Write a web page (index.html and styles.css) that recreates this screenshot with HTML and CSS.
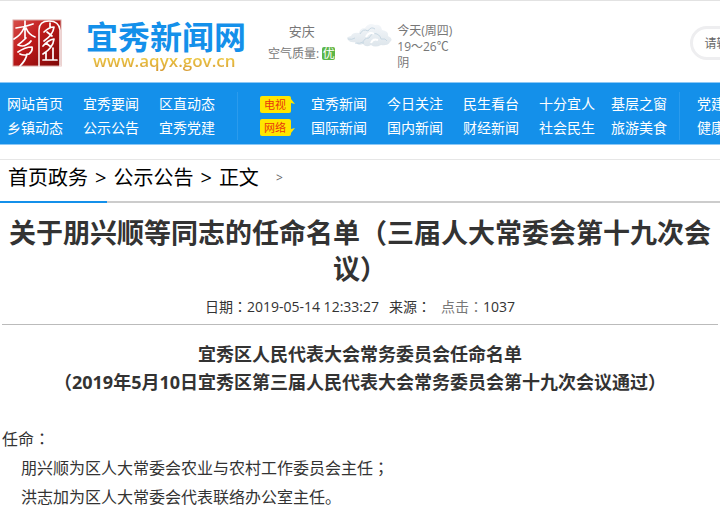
FILE: index.html
```html
<!DOCTYPE html>
<html lang="zh-CN">
<head>
<meta charset="utf-8">
<title>宜秀新闻网</title>
<link rel="stylesheet" href="styles.css">
</head>
<body>
<header class="header">
  <svg class="seal" viewBox="0 0 50 48" aria-hidden="true">
    <defs>
      <linearGradient id="red" x1="0" y1="0" x2="1" y2="1">
        <stop offset="0" stop-color="#d8504c"/>
        <stop offset=".4" stop-color="#c01c1c"/>
        <stop offset="1" stop-color="#7c0606"/>
      </linearGradient>
    </defs>
    <rect x="1" y="1" width="48" height="46" fill="url(#red)" stroke="#d9a5a2"/>
    <g fill="none" stroke="#fff" stroke-width="1.7" stroke-linecap="round" stroke-linejoin="round">
      <path d="M13 2v17M4 9q9-1 17-4M12 9Q9 16 2 20M14 9q3 7 9 9M14 19q-4 4-8 7 5 2 8 0 4-2 5-4M6 33q7-5 14-5 1 4-3 7-5 2-9 0M15 35q-1 6-7 12"/>
      <path d="M27 47V11Q27 2 37 2t11 9v36" stroke-width="1.5"/>
      <path d="M38 4v4M32 13q5-5 10-5-1 8-10 14M35 13l5 4M31 27q5-6 11-7-1 9-11 15M34 24l5 4M34 33v7M41 29v11M31 41h14"/>
    </g>
  </svg>
  <a class="brand" href="#">
    <span class="brand-name">宜秀新闻网</span>
    <span class="brand-url">www.aqyx.gov.cn</span>
  </a>
  <div class="air">
    <span class="city">安庆</span>
    <span class="quality">空气质量: <b class="good">优</b></span>
  </div>
  <svg class="cloud" viewBox="0 0 46 26" aria-hidden="true">
    <defs>
      <linearGradient id="sky" x1="0" y1="0" x2="0" y2="1">
        <stop offset="0" stop-color="#f4f7fa"/>
        <stop offset="1" stop-color="#dde5eb"/>
      </linearGradient>
    </defs>
    <path d="M2 17q-3-3 3-4 2-4 8-3 1-5 6-5 4-6 10-3 6-1 7 5 7 1 6 6 6 3 2 6-2 4-9 3-6 3-10 0-5 3-8-1-6 2-7-2-6 1-8-2z" fill="url(#sky)"/>
    <path d="M14 11q3-6 8-3 3-5 7-2M17 21q0-6 6-6 3-6 8-4 4 2 4 5 5-1 6 2M2 16q4 1 7-1M9 20q5 1 8-1" fill="none" stroke="#c8d8e3"/>
    <path d="M20 14q3-6 8-3M25 20q2-5 7-3" fill="none" stroke="#fff" stroke-width="2"/>
  </svg>
  <div class="forecast">
    <span>今天(周四)</span>
    <span>19～26℃</span>
    <span>阴</span>
  </div>
  <input class="search" type="text" placeholder="请输入关键字" aria-label="搜索">
</header>

<nav class="nav">
  <div class="links group-main">
    <a href="#">网站首页</a><a href="#">宜秀要闻</a><a href="#">区直动态</a>
    <a href="#">乡镇动态</a><a href="#">公示公告</a><a href="#">宜秀党建</a>
  </div>
  <div class="tags">
    <a class="tag" href="#">电视<svg viewBox="0 0 4 17"><path d="M0 3l4 5-4-1z" fill="#ffe600"/></svg></a>
    <a class="tag" href="#">网络<svg viewBox="0 0 4 17"><path d="M0 14l4-5-4 1z" fill="#ffe600"/></svg></a>
  </div>
  <div class="links group-media">
    <a href="#">宜秀新闻</a><a href="#">今日关注</a><a href="#">民生看台</a><a href="#">十分宜人</a><a href="#">基层之窗</a>
    <a href="#">国际新闻</a><a href="#">国内新闻</a><a href="#">财经新闻</a><a href="#">社会民生</a><a href="#">旅游美食</a>
  </div>
  <div class="links group-more">
    <a href="#">党建</a>
    <a href="#">健康</a>
  </div>
</nav>

<div class="crumbs">
  <a href="#">首页政务</a><span>&gt;</span><a href="#">公示公告</a><span>&gt;</span><a href="#">正文</a><span class="crumb-end">&gt;</span>
</div>

<main class="article">
  <h1>关于朋兴顺等同志的任命名单<span class="mid" lang="zh-TW">（</span>三届人大常委会第十九次会议<span class="mid" lang="zh-TW">）</span></h1>
  <div class="meta">
    <span>日期<span class="mid" lang="zh-TW">：</span>2019-05-14 12:33:27</span>
    <span>来源<span class="mid" lang="zh-TW">：</span></span>
    <span><span class="soft">点击<span class="mid" lang="zh-TW">：</span></span>1037</span>
  </div>
  <h2>宜秀区人民代表大会常务委员会任命名单<br><span class="mid" lang="zh-TW">（</span>2019年5月10日宜秀区第三届人民代表大会常务委员会第十九次会议通过<span class="mid" lang="zh-TW">）</span></h2>
  <div class="body">
    <p>任命<span class="mid" lang="zh-TW">：</span></p>
    <p class="item">朋兴顺为区人大常委会农业与农村工作委员会主任<span class="mid" lang="zh-TW">；</span></p>
    <p class="item">洪志加为区人大常委会代表联络办公室主任。</p>
  </div>
</main>
</body>
</html>
```
FILE: styles.css
```css
* { box-sizing: border-box; }

body {
  margin: 0;
  background: #fff;
  color: #333;
  font-family: "Open Sans", "Noto Sans CJK SC", sans-serif;
}

a { color: inherit; text-decoration: none; }

/* Full-width punctuation centred in its em box */
.mid { font-family: "Open Sans", "Noto Sans CJK TC", sans-serif; }

.header {
  display: flex;
  align-items: flex-start;
  height: 82px;
  padding: 18px 0 0 12px;
  overflow: hidden;
  border-top: 1px solid #e2e2e2;
  color: #777;
  font-size: 12px;
  line-height: 16px;
}
.header > * { flex: none; }

.seal { width: 50px; height: 48px; }

.brand { display: flex; flex-direction: column; width: 160px; margin-left: 24px; }
.brand-name {
  color: #1490ea;
  font-size: 32px;
  font-weight: 700;
  line-height: 36px;
}
.brand-url {
  padding-left: 7px;
  background: linear-gradient(#eecb45 30%, #d79c35);
  background-clip: text;
  color: transparent;
  font-size: 17px;
  font-weight: 600;
  line-height: 20px;
  margin-top: -4px;
}

.air {
  display: flex;
  flex-direction: column;
  align-items: center;
  gap: 7px;
  margin: 4px 0 0 22px;
}
.city { font-size: 13px; }
.good {
  display: inline-block;
  width: 13px;
  border-radius: 2px;
  background: #5cb648;
  color: #fff;
  font-weight: 400;
  line-height: 13px;
  text-align: center;
}

.cloud { width: 46px; height: 26px; margin: 4px 0 0 11px; }
.forecast { display: flex; flex-direction: column; margin: 4px 0 0 5px; }

.search {
  width: 220px;
  height: 34px;
  margin: 7px 0 0 238px;
  padding: 0 11px;
  border: 3px solid #eeeef0;
  border-radius: 17px;
  font: inherit;
}
.search::placeholder { color: #666; }

.nav {
  display: flex;
  padding: 9px 0 4px 7px;
  overflow: hidden;
  border-top: 1px solid #8cc8f6;
  border-bottom: 1px solid #8cc8f6;
  background: #1490ea;
  color: #fff;
  font-size: 14px;
  line-height: 24px;
}
.nav > * { flex: none; }
.links { display: grid; white-space: nowrap; }
.group-main {
  grid-template-columns: 76px 76px 78px;
  border-right: 1px solid #2b9bed;
}
.group-media {
  grid-template-columns: repeat(3, 76px) 72px 68px;
  margin-left: 20px;
  border-right: 1px solid #2b9bed;
}
.group-more { margin-left: 17px; }

.tags {
  display: flex;
  flex-direction: column;
  gap: 6px;
  margin: 4px 0 0 22px;
}
.tag {
  display: flex;
  width: 31px;
  padding-left: 4px;
  border-radius: 2px;
  background: #ffe600;
  color: #e8380d;
  font-size: 11px;
  line-height: 17px;
  white-space: nowrap;
}
.tag svg { flex: none; width: 4px; height: 17px; margin-left: 5px; }

.crumbs {
  display: flex;
  gap: 7px;
  margin-top: 14px;
  padding: 2px 8px 9px;
  border-top: 1px solid #e6e6e6;
  background: linear-gradient(90deg, #1490ea 107px, #ccc 107px) bottom / 100% 2px no-repeat;
  color: #000;
  font-size: 20px;
  line-height: 32px;
}
.crumb-end { margin-left: 10px; color: #666; font-size: 12px; }

.article { padding: 12px 2px 0; }

h1 {
  margin: 0;
  font-size: 27px;
  line-height: 36px;
  text-align: center;
}
.meta {
  display: flex;
  justify-content: center;
  gap: 10px;
  padding: 10px 0 7px;
  border-bottom: 1px solid #bbb;
  font-size: 14px;
  line-height: 20px;
}
.soft { color: #777; }
h2 {
  margin: 15px 0 0;
  font-size: 18px;
  line-height: 28px;
  text-align: center;
}
.body { margin-top: 29px; font-size: 16px; line-height: 29px; }
.body p { margin: 0; }
.body .item { padding-left: 19px; }
```
